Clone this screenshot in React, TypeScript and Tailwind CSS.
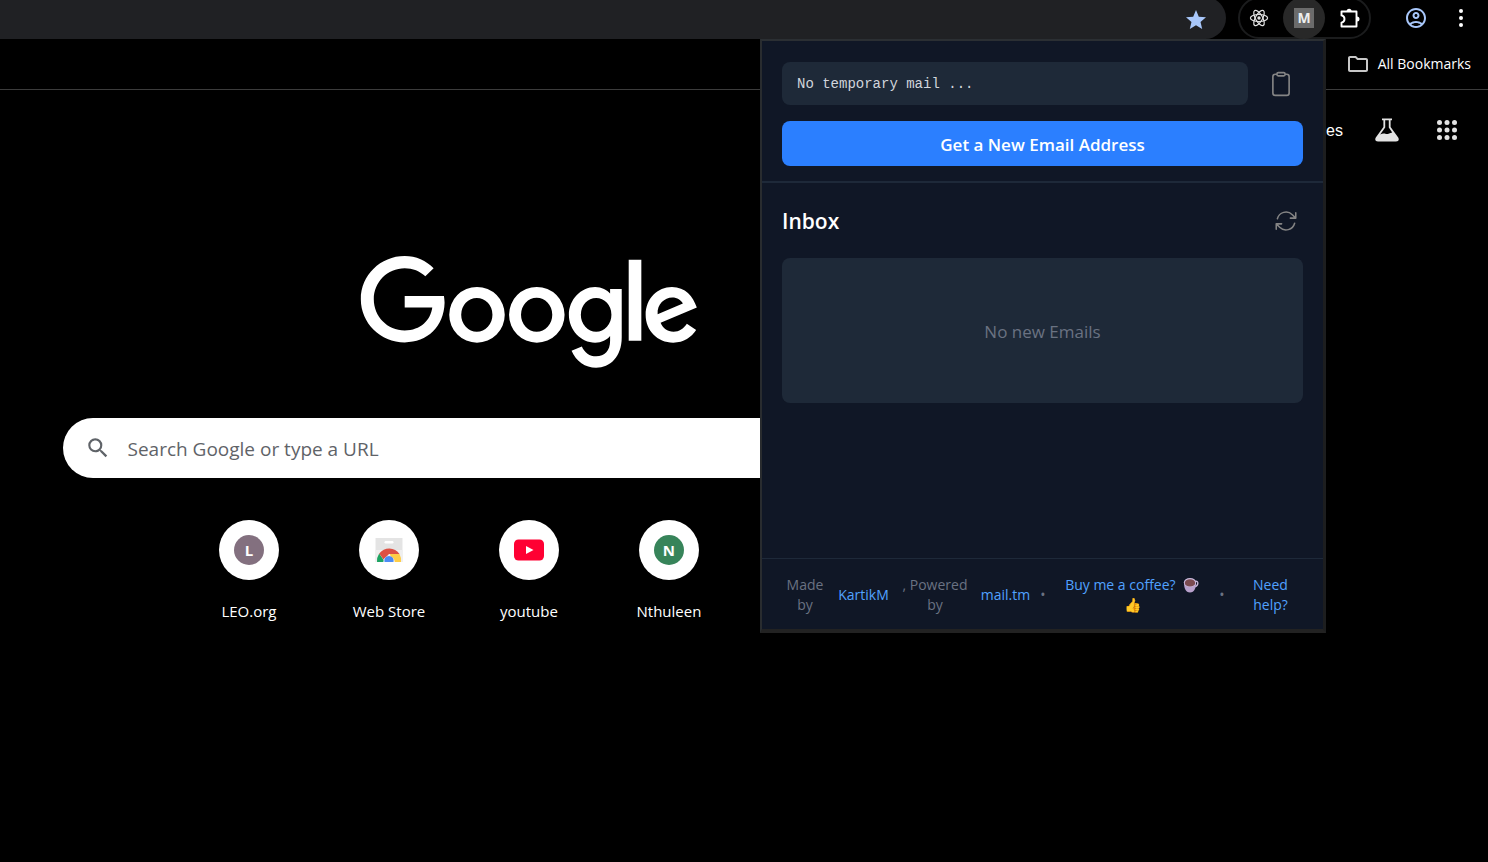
import type { ReactNode } from "react";
import { IoClipboardOutline } from "react-icons/io5";
import { MdOutlineAccountCircle, MdOutlineFolder, MdSearch, MdStar } from "react-icons/md";

const orbits = [0, 60, 120];

function ReactIcon() {
  return (
    <svg viewBox="0 0 20 20" className="size-5" fill="none" stroke="#e3e3e3" strokeWidth="1.2">
      {orbits.map((angle) => (
        <ellipse key={angle} cx="10" cy="10" rx="8.6" ry="3.5" transform={`rotate(${angle} 10 10)`} />
      ))}
      <circle cx="10" cy="10" r="1.7" fill="#e3e3e3" stroke="none" />
    </svg>
  );
}

function PuzzleIcon() {
  return (
    <svg viewBox="0 0 22 22" className="size-[22px]">
      <path
        d="M2.500 4.500H17.500V19.500H2.500V15.600C4.600 15.200 5.500 13.800 5.500 12C5.500 10.200 4.600 8.800 2.500 8.400Z"
        fill="none"
        stroke="#fff"
        strokeWidth="1.900"
        strokeLinejoin="round"
      />
      <path d="M7.600 4.200A2.500 2.500 0 0 1 12.600 4.200Z M18 9.500A2.500 2.500 0 0 1 18 14.500Z" fill="#fff" />
    </svg>
  );
}

function FlaskIcon() {
  return (
    <svg viewBox="0 0 24 24" className="size-6">
      <path
        fillRule="evenodd"
        fill="#e3e3e3"
        d="M7 .5H17V2.300H15.600V9L23.200 19.500C24.600 21.700 23.200 23.500 21 23.500H3C.8 23.500-.6 21.700.8 19.500L8.400 9V2.300H7ZM10.200 2.300V9.600L5.200 16.600C7.500 15.300 9 15.400 11 16C13 16.500 14.500 14.800 17.200 14.400L13.800 9.600V2.300Z"
      />
    </svg>
  );
}

function AppsIcon() {
  const steps = [2.5, 10, 17.5];
  return (
    <svg viewBox="0 0 20 20" className="size-5" fill="#e3e3e3">
      {steps.flatMap((y) => steps.map((x) => <circle key={`${x}-${y}`} cx={x} cy={y} r="2.500" />))}
    </svg>
  );
}

function RefreshIcon() {
  return (
    <svg viewBox="0 0 24 24" className="size-[26px]" fill="none" stroke="#858585" strokeWidth="1.400" strokeLinecap="round" strokeLinejoin="round">
      <path d="M16.023 9.348h4.992v-.001M2.985 19.644v-4.992m0 0h4.992m-4.993 0 3.181 3.183a8.250 8.250 0 0 0 13.803-3.700M4.031 9.865a8.250 8.250 0 0 1 13.803-3.700l3.181 3.182m0-4.991v4.990" />
    </svg>
  );
}

function CoffeeIcon() {
  return (
    <svg viewBox="0 0 16 16" role="img" aria-label="coffee" className="mb-0.5 inline size-4">
      <path d="M12 4.500C15.800 3 16 8.500 11.500 10" fill="none" stroke="#c9b8d8" strokeWidth="1.300" />
      <path d="M1 5.500C1 11 2.500 15.500 7 15.500C11.500 15.500 13 11 13 5.500Z" fill="#b8a1cc" />
      <ellipse cx="7" cy="5.600" rx="6.200" ry="4.600" fill="#cdbbdd" />
      <ellipse cx="7" cy="5.900" rx="5.200" ry="3.700" fill="#7b4b50" />
    </svg>
  );
}

function GoogleLogo() {
  return (
    <svg viewBox="58 45 1012 337" role="img" aria-label="Google" className="h-28 w-[338px]" fill="#fff" fillRule="evenodd">
      <path d="M277 82L252 106C236 91 214 82 190 82C138 82 97 124 97 175C97 227 138 269 190 269C238 269 268 238 273 200H190V165H308C309 172 310 180 310 186C308 258 258 305 190 305C117 305 58 247 58 175C58 103 117 45 190 45C224 45 255 59 277 82Z" />
      <path d="M324 222a83.500 84 0 1 0 167 0a83.500 84 0 1 0-167 0ZM360 222a47 51 0 1 1 94 0a47 51 0 1 1-94 0Z" />
      <path d="M504 222a83.500 84 0 1 0 167 0a83.500 84 0 1 0-167 0ZM540 222a47 51 0 1 1 94 0a47 51 0 1 1-94 0Z" />
      <path d="M843 144V290C843 348 808 381 766 381C733 381 706 362 692 330L723 317C731 335 746 347 766 347C792 347 808 330 808 300V286C798 298 783 306 763 306C720 306 684 268 684 222C684 176 720 138 763 138C783 138 799 147 808 158V144ZM720 222a46 51 0 1 0 92 0a46 51 0 1 0-92 0Z" />
      <path d="M864 56H902V300H864Z" />
      <path d="M1069 200L960 246C967 262 980 273 999 273C1016 273 1029 264 1039 249L1067 268C1053 289 1030 306 998 306C950 306 915 269 915 222C915 172 951 138 994 138C1035 138 1057 166 1069 200ZM951 220L1027 188C1022 178 1010 170 995 170C972 170 949 190 951 220Z" />
    </svg>
  );
}

function WebStoreIcon() {
  return (
    <svg viewBox="0 0 28 26" className="h-[26px] w-7">
      <path d="M.5 1H27.500V25H.5Z" fill="#e4e4e4" />
      <path d="M.5 13H27.500V25H.5Z" fill="#efefef" />
      <rect x="9.500" y="4" width="9" height="2.400" rx="1.200" fill="#fff" />
      <path d="M2 25A12.300 13 0 0 1 4.200 16.500L10 25Z" fill="#1da462" />
      <path d="M4.200 16.500A12.300 12.300 0 0 1 24.500 17H14L8.500 22.500Z" fill="#dd5144" />
      <path d="M24.500 17A12.300 13 0 0 1 26 25H17L15 17Z" fill="#ffcd46" />
      <path d="M8.300 25A5.700 5.700 0 1 1 19.700 25Z" fill="#fff" />
      <path d="M9.500 25A4.700 4.700 0 1 1 18.500 25Z" fill="#4c8bf5" />
    </svg>
  );
}

function YoutubeIcon() {
  return (
    <svg viewBox="0 0 30 22" className="h-[22px] w-[30px]">
      <rect x="0" y="0.500" width="30" height="21" rx="4.500" fill="#ff0033" />
      <path d="M12 7V15L19.500 11Z" fill="#fff" />
    </svg>
  );
}

const shortcuts: { name: string; icon: ReactNode }[] = [
  {
    name: "LEO.org",
    icon: <span className="flex size-[30px] items-center justify-center rounded-full bg-[#83707f] text-[15px] font-bold text-white">L</span>,
  },
  { name: "Web Store", icon: <WebStoreIcon /> },
  { name: "youtube", icon: <YoutubeIcon /> },
  {
    name: "Nthuleen",
    icon: <span className="flex size-[30px] items-center justify-center rounded-full bg-[#37845a] text-[15px] font-bold text-white">N</span>,
  },
];

function Toolbar() {
  return (
    <header className="flex h-[39px] items-end overflow-hidden">
      <div className="flex h-[42px] flex-1 items-center justify-end rounded-r-full bg-[#202124] pt-1 pr-[18px]">
        <button aria-label="Bookmark this tab">
          <MdStar className="size-6 text-[#a8c7fa]" />
        </button>
      </div>
      <div className="ml-3 flex h-[42px] w-[133px] items-center rounded-full border-2 border-[#1b1c1d] pl-[9px]">
        <button aria-label="React Developer Tools">
          <ReactIcon />
        </button>
        <button aria-label="Temporary mail" className="ml-3.5 flex size-[42px] items-center justify-center rounded-full bg-[#282828]">
          <span className="flex size-5 items-center justify-center bg-[#6b6b6b] text-sm font-bold text-[#eee]">M</span>
        </button>
        <button aria-label="Extensions" className="ml-3.5">
          <PuzzleIcon />
        </button>
      </div>
      <div className="ml-8 flex h-[42px] w-[85px] items-center justify-between">
        <button aria-label="Profile" className="ml-px">
          <MdOutlineAccountCircle className="size-6 text-[#a8c7fa]" />
        </button>
        <button aria-label="Menu" className="mr-6">
          <svg viewBox="0 0 6 20" className="h-5 w-1.5" fill="#fff">
            <circle cx="3" cy="3" r="2" />
            <circle cx="3" cy="10" r="2" />
            <circle cx="3" cy="17" r="2" />
          </svg>
        </button>
      </div>
    </header>
  );
}

function MailPopup() {
  const link = "text-[#51a2ff]";
  return (
    <section
      aria-label="Temporary mail"
      className="absolute top-[39px] right-[162px] flex h-[594px] w-[566px] flex-col border-t-2 border-r-3 border-b-4 border-l-2 border-t-[#2b2f33] border-r-[#1d1e1f] border-b-[#222222] border-l-[#292c2f] bg-[#101726] text-[#6a7282]"
    >
      <div className="border-b-2 border-[#1e2939] px-5 pt-[21px] pb-[15px]">
        <div className="flex items-center">
          <input
            readOnly
            aria-label="Temporary mail address"
            value="No temporary mail ..."
            className="h-[43px] min-w-0 flex-1 rounded-lg bg-[#1e2938] px-[15px] font-['Liberation_Mono',monospace] text-sm text-[#d1d5dc] outline-none"
          />
          <button aria-label="Copy address" className="flex w-[55px] justify-center pl-2.5">
            <IoClipboardOutline className="size-[26px] text-[#858585]" />
          </button>
        </div>
        <button className="mt-4 h-[45px] w-full rounded-lg bg-[#2b7fff] pt-0.5 text-[17px] font-semibold text-white">Get a New Email Address</button>
      </div>
      <div className="flex-1 px-5 pt-5">
        <div className="flex h-9 items-center justify-between pr-1">
          <h1 className="pt-0.5 text-[21px] font-semibold text-white">Inbox</h1>
          <button aria-label="Refresh inbox">
            <RefreshIcon />
          </button>
        </div>
        <div className="mt-[19px] flex h-[145px] items-center justify-center rounded-lg bg-[#1e2938] pt-0.5 text-[17px]">No new Emails</div>
      </div>
      <footer className="grid h-[71px] grid-cols-[46px_71px_72px_69px_6px_172px_8px_1fr] items-center border-t border-[#1e2939] px-5 pt-0.5 text-center text-sm leading-5">
        <span>Made by</span>
        <a href="#author" className={link}>KartikM</a>
        <span>, Powered by</span>
        <a href="#mail" className={link}>mail.tm</a>
        <span>•</span>
        <a href="#coffee" className={link}>Buy me a coffee?&nbsp; <CoffeeIcon /><br />👍</a>
        <span>•</span>
        <a href="#help" className="pl-3 text-[#51a2ff]">Need<br />help?</a>
      </footer>
    </section>
  );
}

export default function App() {
  return (
    <div className="relative min-h-screen overflow-hidden bg-black font-['Open_Sans','Noto_Sans',sans-serif] text-white">
      <Toolbar />
      <nav className="flex h-[51px] items-center justify-end border-b border-[#3c3c3c] pr-[17px]">
        <a href="#bookmarks" className="flex items-center gap-2 text-sm">
          <MdOutlineFolder className="size-6 text-[#c7c7c7]" />
          All Bookmarks
        </a>
      </nav>
      <div className="flex h-20 items-center justify-end pr-[31px]">
        <a href="#images" className="pt-0.5 font-['Liberation_Sans',sans-serif] text-base">Images</a>
        <button aria-label="Search labs" className="ml-8">
          <FlaskIcon />
        </button>
        <button aria-label="Google apps" className="ml-[38px]">
          <AppsIcon />
        </button>
      </div>
      <main className="flex w-[71.1%] flex-col items-center pt-[86px]">
        <GoogleLogo />
        <label className="mt-[50px] flex h-[60px] w-[88%] items-center rounded-full bg-white pl-[22px] text-[#5f6368]">
          <MdSearch className="size-[26px]" />
          <input
            aria-label="Search"
            placeholder="Search Google or type a URL"
            className="ml-4 flex-1 pt-0.5 text-[19px] outline-none placeholder:text-[#5f6368]"
          />
        </label>
        <ul className="mt-[42px] grid w-[700px] grid-cols-5">
          {shortcuts.map(({ name, icon }) => (
            <li key={name}>
              <a href="#shortcut" className="flex flex-col items-center gap-[19px] text-[15px] leading-6">
                <span className="flex size-[60px] items-center justify-center rounded-full bg-white">{icon}</span>
                {name}
              </a>
            </li>
          ))}
        </ul>
      </main>
      <MailPopup />
    </div>
  );
}
